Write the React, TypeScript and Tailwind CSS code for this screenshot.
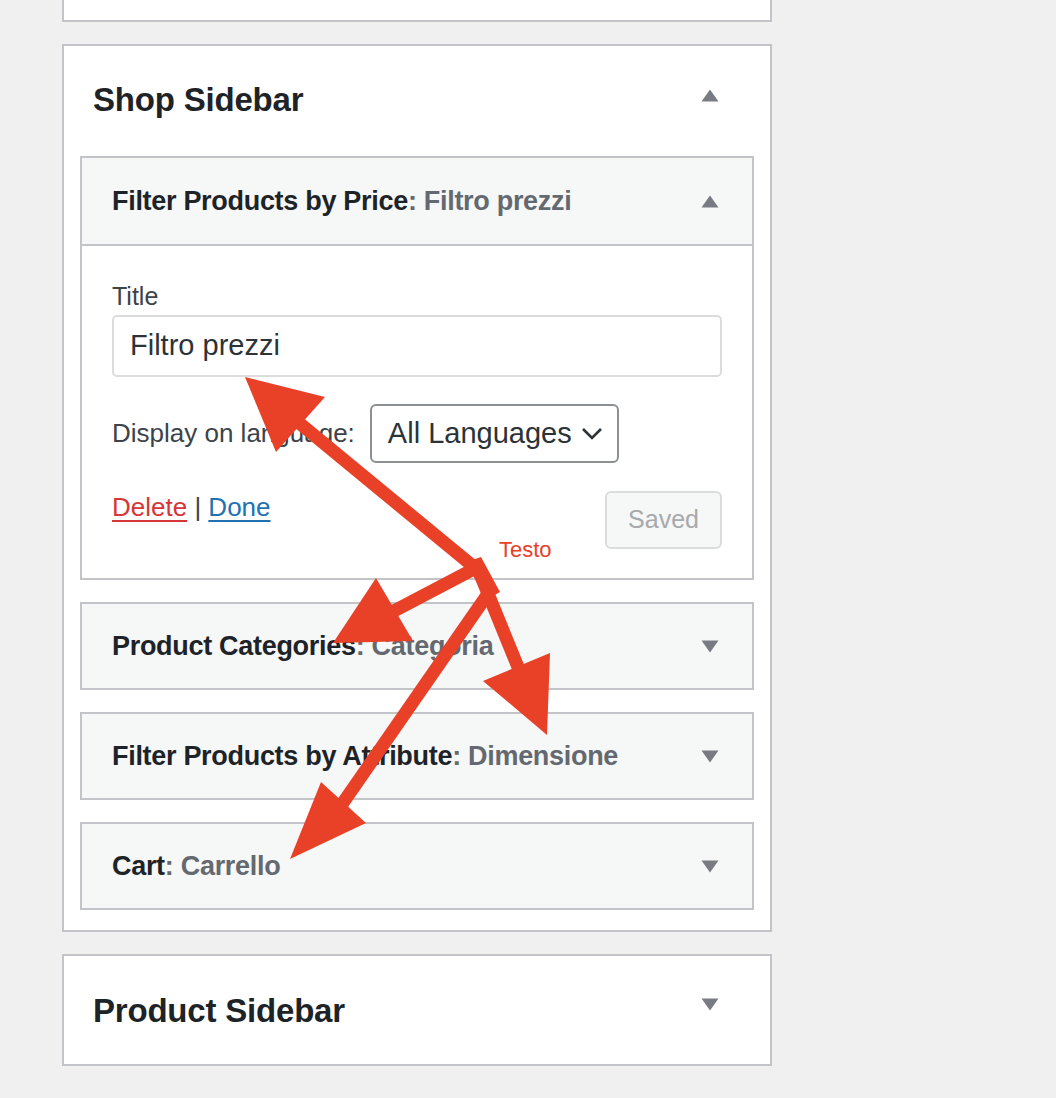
import React from "react";

const font = { fontFamily: '"Liberation Sans", Arial, sans-serif' };

function Tri({ up }: { up?: boolean }) {
  return (
    <svg width="18" height="13" viewBox="0 0 18 13" className="shrink-0">
      {up ? (
        <polygon points="9,0.5 17.5,12.5 0.5,12.5" fill="#787c82" />
      ) : (
        <polygon points="0.5,0.5 17.5,0.5 9,12.5" fill="#787c82" />
      )}
    </svg>
  );
}

function WidgetHeader({ name, title, open }: { name: string; title: string; open?: boolean }) {
  return (
    <div
      className={
        (open ? "h-[86px]" : "h-[84px]") +
        " flex items-center justify-between pl-[30px] pr-[33px] bg-[#f6f7f7]"
      }
    >
      <div className="text-[27px] font-bold text-[#1d2327] tracking-[-0.3px]">
        {name}
        <span className="text-[#646970] font-bold">: {title}</span>
      </div>
      <Tri up={open} />
    </div>
  );
}

export default function App() {
  return (
    <div className="relative w-[1056px] h-[1098px] bg-[#f0f0f1] overflow-hidden" style={font}>
      <div className="ml-[62px] w-[710px] flex flex-col gap-[22px]">
        <div className="h-[22px] bg-white border-2 border-t-0 border-[#c3c4c7]" />

        <div className="bg-white border-2 border-[#c3c4c7] pb-[20px]">
          <div className="h-[110px] flex items-center justify-between pl-[29px] pr-[51px]">
            <div className="text-[33px] font-bold text-[#1d2327] tracking-[-0.2px] -mt-[2px]">Shop Sidebar</div>
            <div className="-mt-[12px]"><Tri up /></div>
          </div>
          <div className="px-[16px] flex flex-col gap-[22px]">
            <div className="border-2 border-[#c3c4c7]">
              <WidgetHeader name="Filter Products by Price" title="Filtro prezzi" open />
              <div className="bg-white border-t-2 border-[#c3c4c7] px-[30px] pt-[36px] pb-[29px] text-[#3c434a]">
                <div className="text-[25px] leading-[28px]">Title</div>
                <div className="mt-[5px] h-[62px] border-2 border-[#dcdcde] rounded-[5px] flex items-center pl-[16px] text-[29px] text-[#2c3338]">
                  Filtro prezzi
                </div>
                <div className="mt-[27px] flex items-center gap-[15px]">
                  <span className="text-[26px]">Display on language:</span>
                  <div className="h-[59px] w-[249px] border-2 border-[#8c8f94] rounded-[6px] flex items-center justify-between pl-[16px] pr-[14px] text-[29px] text-[#2c3338]">
                    <span>All Languages</span>
                    <svg width="22" height="14" viewBox="0 0 22 14">
                      <polyline points="2,2 11,11 20,2" fill="none" stroke="#2c3338" strokeWidth="2.6" />
                    </svg>
                  </div>
                </div>
                <div className="mt-[28px] flex items-start justify-between">
                  <div className="text-[26px] leading-[30px] pt-[1px]">
                    <span className="text-[#d63638] underline underline-offset-[4px]">Delete</span>
                    <span className="text-[#3c434a]"> | </span>
                    <span className="text-[#2271b1] underline underline-offset-[4px]">Done</span>
                  </div>
                  <div className="h-[58px] w-[117px] border-2 border-[#dcdcde] bg-[#f6f7f7] rounded-[6px] flex items-center justify-center text-[25px] text-[#a7aaad]">
                    Saved
                  </div>
                </div>
              </div>
            </div>
            <div className="border-2 border-[#c3c4c7]">
              <WidgetHeader name="Product Categories" title="Categoria" />
            </div>
            <div className="border-2 border-[#c3c4c7]">
              <WidgetHeader name="Filter Products by Attribute" title="Dimensione" />
            </div>
            <div className="border-2 border-[#c3c4c7]">
              <WidgetHeader name="Cart" title="Carrello" />
            </div>
          </div>
        </div>

        <div className="h-[112px] bg-white border-2 border-[#c3c4c7] flex items-center justify-between pl-[29px] pr-[51px]">
          <div className="text-[33px] font-bold text-[#1d2327] tracking-[-0.2px] pt-[2px]">Product Sidebar</div>
          <div className="-mt-[12px]"><Tri /></div>
        </div>
      </div>

      <svg className="absolute inset-0 pointer-events-none" width="1056" height="1098" viewBox="0 0 1056 1098">
        <g stroke="#e94128" strokeWidth="13" fill="none" strokeLinecap="butt">
          <line x1="474" y1="567" x2="298" y2="422" />
          <line x1="472" y1="570" x2="392" y2="612" />
          <line x1="480" y1="574" x2="520" y2="672" />
          <line x1="492" y1="588" x2="338" y2="810" />
        </g>
        <g fill="#e94128">
          <polygon points="245,377 276,452 325,397" />
          <polygon points="333,643 376,578 413,641" />
          <polygon points="547,735 483,681 550,653" />
          <polygon points="290,859 321,782 366,823" />
          <polygon points="466,562 481,557 500,592 486,600" />
        </g>
        <text x="499" y="557" fill="#e94128" fontSize="22" fontFamily="Liberation Sans, Arial, sans-serif">Testo</text>
      </svg>
    </div>
  );
}
